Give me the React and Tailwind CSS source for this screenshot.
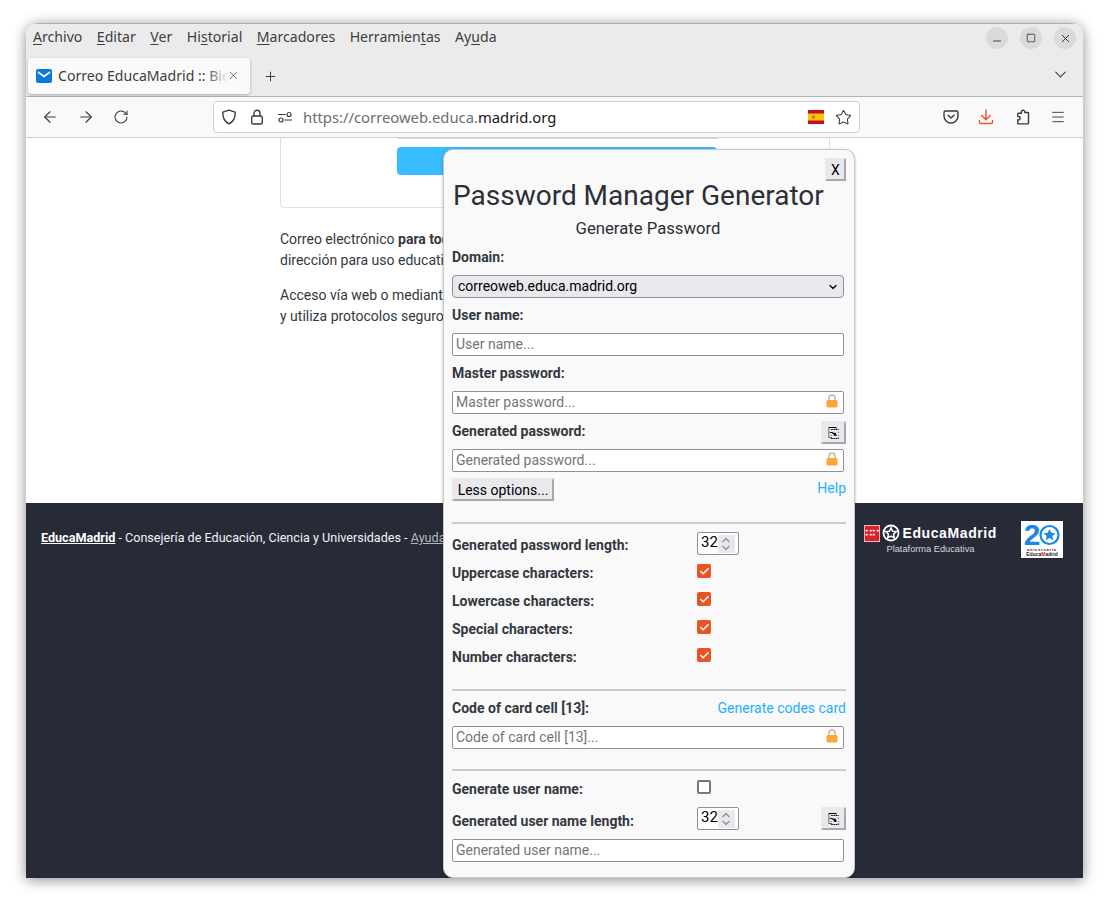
import { ArrowLeft, ArrowRight, RotateCw, X, Plus, ChevronDown, Minus, Square, Menu, Star, Check } from "lucide-react";

const menuItems = [
  ["", "A", "rchivo"],
  ["", "E", "ditar"],
  ["", "V", "er"],
  ["Hi", "s", "torial"],
  ["", "M", "arcadores"],
  ["Herramien", "t", "as"],
  ["Ay", "u", "da"],
];

// Title bar round buttons
const WindowButton = ({ children }) => (
  <div className="size-[22px] rounded-full bg-[#dadada] flex items-center justify-center text-[#2e2e2e]">{children}</div>
);

const Shield = () => (
  <svg width="16" height="16" viewBox="0 0 16 16" fill="none" stroke="#3a3a3e" strokeWidth="1.4">
    <path d="M8 1.2 14.2 3.2c.2 5.6-1.6 9.4-6.2 11.6C3.400 12.600 1.600 8.800 1.800 3.200Z" strokeLinejoin="round" />
  </svg>
);

const Lock = () => (
  <svg width="16" height="16" viewBox="0 0 16 16" fill="none" stroke="#3a3a3e" strokeWidth="1.4">
    <rect x="2.700" y="7" width="10.600" height="8" rx="1.600" />
    <path d="M5 7V4.300a3 3 0 0 1 6 0V7" />
  </svg>
);

const Permissions = () => (
  <svg width="16" height="16" viewBox="0 0 16 16" fill="none" stroke="#3a3a3e" strokeWidth="1.200">
    <path d="M1 5.500h7.500" />
    <circle cx="12" cy="5.500" r="2" />
    <path d="M15 11H7.500" />
    <circle cx="4" cy="11" r="2" />
  </svg>
);

const Pocket = () => (
  <svg width="16" height="16" viewBox="0 0 16 16" fill="none" stroke="#3a3a3e" strokeWidth="1.400" strokeLinecap="round" strokeLinejoin="round">
    <path d="M2.500 2h11A1.500 1.500 0 0 1 15 3.500V7a7 7 0 0 1-14 0V3.500A1.500 1.500 0 0 1 2.500 2Z" />
    <path d="m5 6.300 3 2.700 3-2.700" />
  </svg>
);

const Download = () => (
  <svg width="16" height="16" viewBox="0 0 16 16" fill="none" stroke="#f2521f" strokeWidth="1.400" strokeLinecap="round" strokeLinejoin="round">
    <path d="M8 1v9.500M3.800 6.600 8 10.800l4.200-4.200" />
    <path d="M1.500 11.500v1.700c0 .8.600 1.300 1.300 1.300h10.400c.7 0 1.300-.5 1.300-1.300v-1.700" />
  </svg>
);

const Puzzle = () => (
  <svg width="16" height="16" viewBox="0 0 16 16" fill="none" stroke="#3a3a3e" strokeWidth="1.400" strokeLinejoin="round">
    <path d="M9 1.200c1.300 0 2 .9 1.800 2.300h3c.4 0 .7.300.7.700v10c0 .4-.3.700-.7.700H4.500a.7.700 0 0 1-.7-.7v-3.400c1.500.3 2.400-.4 2.400-1.500S5.300 7.300 3.800 7.500V5c0-.4.300-.7.700-.7h3C7 2.500 7.700 1.200 9 1.200Z" />
  </svg>
);

const SpainFlag = () => (
  <svg width="16" height="14" viewBox="0 0 16 14">
    <rect width="16" height="14" fill="#c60b1e" />
    <rect y="3.500" width="16" height="7" fill="#ffc400" />
    <rect x="4" y="5.500" width="3" height="3" fill="#c8703a" />
  </svg>
);

const OrangeLock = () => (
  <svg width="12" height="14" viewBox="0 0 12 14" fill="none">
    <path d="M3 6.500V4a3 3 0 0 1 6 0v2.500" stroke="#c9b89a" strokeWidth="1.500" />
    <rect x="0.500" y="6" width="11" height="7.500" rx="1.500" fill="#ffa436" />
  </svg>
);

const TextField = ({ placeholder, locked }) => (
  <div className="relative w-[392px] h-[23px]">
    <input
      placeholder={placeholder}
      className="w-full h-full bg-white border border-[#8f8f9d] rounded-[2px] pl-[3px] text-[14px] text-black placeholder:text-[#757575] outline-none"
    />
    {locked && (
      <span className="absolute right-[6px] top-[4px] flex">
        <OrangeLock />
      </span>
    )}
  </div>
);

const Label = ({ children, className = "" }) => (
  <span className={`font-bold text-[14px] leading-[20px] text-[#33383f] whitespace-nowrap ${className}`}>{children}</span>
);

const CopyButton = () => (
  <button className="w-[25px] h-[23px] bg-[#e9e9ed] border-2 border-[#e9e9ed] border-r-[#a8a8a8] border-b-[#a8a8a8] flex items-center justify-center text-[14px] leading-none text-black font-['DejaVu_Sans',sans-serif]">
    ⎘
  </button>
);

const NumberField = () => (
  <div className="w-[42px] h-[23px] bg-white border border-[#8f8f9d] rounded-[2px] flex items-center pl-[3px] pr-[3px] justify-between">
    <span className="text-[15px] leading-none text-black -mt-[2px]">32</span>
    <span className="w-[18px] h-[18px] bg-[#e9e9ed] flex items-center justify-center">
      <svg width="10" height="14" viewBox="0 0 10 14" fill="none" stroke="#8a8a8a" strokeWidth="1.200">
        <path d="m1.500 5 3.500-3.500L8.500 5M1.500 9 5 12.500 8.500 9" />
      </svg>
    </span>
  </div>
);

const CheckBox = ({ checked }) =>
  checked ? (
    <span className="size-[14px] rounded-[2px] bg-[#e95420] flex items-center justify-center">
      <Check size={11} strokeWidth={3.500} className="text-white" />
    </span>
  ) : (
    <span className="size-[14px] rounded-[2px] bg-white border-2 border-[#77767b]" />
  );

const OptionRow = ({ label, checked }) => (
  <div className="flex items-center h-[28px]">
    <Label className="w-[245px]">{label}</Label>
    <span className="-mt-[4px] flex">
      <CheckBox checked={checked} />
    </span>
  </div>
);

const Divider = ({ className = "" }) => <div className={`h-[2px] bg-[#cccccc] ${className}`} />;

const Popup = () => (
  <div className="absolute left-[417px] top-[126px] w-[412px] h-[729px] bg-[#f9f9fa] border border-[#c8c8c8] rounded-[10px] pl-[8px] pr-[8px] shadow-[0_1px_3px_rgba(0,0,0,0.3)] font-['Roboto',sans-serif] overflow-hidden">
    <div className="flex justify-end pt-[8px]">
      <button className="w-[21px] h-[23px] bg-[#e9e9ed] border-2 border-[#e9e9ed] border-r-[#a8a8a8] border-b-[#a8a8a8] text-[14px] leading-none text-black">
        X
      </button>
    </div>
    <h1 className="ml-[1px] -mt-[2px] text-[28px] leading-[34px] text-[#2b3036] whitespace-nowrap">Password Manager Generator</h1>
    <p className="text-center text-[16.700px] leading-[20px] text-[#2b3036] mt-[6px] mr-[2px]">Generate Password</p>

    <div className="mt-[8px] h-[20px] flex items-center">
      <Label>Domain:</Label>
    </div>
    <div className="mt-[8px] w-[392px] h-[23px] bg-[#e9e9ed] border border-[#8f8f9d] rounded-[4px] flex items-center justify-between pl-[5px] pr-[4px] text-[14px] text-black">
      <span>correoweb.educa.madrid.org</span>
      <ChevronDown size={12} strokeWidth={2.500} />
    </div>

    <div className="mt-[7px] h-[20px] flex items-center">
      <Label>User name:</Label>
    </div>
    <div className="mt-[7px]">
      <TextField placeholder="User name..." />
    </div>

    <div className="mt-[8px] h-[20px] flex items-center">
      <Label>Master password:</Label>
    </div>
    <div className="mt-[7px]">
      <TextField placeholder="Master password..." locked />
    </div>

    <div className="mt-[8px] h-[23px] flex items-center justify-between">
      <Label className="-mt-[3px]">Generated password:</Label>
      <CopyButton />
    </div>
    <div className="mt-[4px]">
      <TextField placeholder="Generated password..." locked />
    </div>

    <div className="mt-[7px] flex items-center justify-between">
      <button className="w-[102px] h-[23px] bg-[#e9e9ed] border-2 border-[#e9e9ed] border-r-[#a8a8a8] border-b-[#a8a8a8] text-[14px] leading-none text-black">
        Less options...
      </button>
      <a className="text-[14px] text-[#1eb0ff] -mt-[2px]">Help</a>
    </div>

    <Divider className="mt-[21px]" />

    <div className="mt-[8px] flex items-center h-[23px]">
      <Label className="w-[245px] mt-[3px]">Generated password length:</Label>
      <NumberField />
    </div>
    <div className="mt-[4px]">
      <OptionRow label="Uppercase characters:" checked />
      <OptionRow label="Lowercase characters:" checked />
      <OptionRow label="Special characters:" checked />
      <OptionRow label="Number characters:" checked />
    </div>

    <Divider className="mt-[18px]" />

    <div className="mt-[6px] h-[22px] flex items-center justify-between">
      <Label>Code of card cell [13]:</Label>
      <a className="text-[14px] text-[#1eb0ff]">Generate codes card</a>
    </div>
    <div className="mt-[6px]">
      <TextField placeholder="Code of card cell [13]..." locked />
    </div>

    <Divider className="mt-[21px]" />

    <div className="mt-[7px] h-[22px] flex items-center">
      <Label className="w-[245px]">Generate user name:</Label>
      <span className="-mt-[4px] flex">
        <CheckBox />
      </span>
    </div>
    <div className="mt-[7px] h-[23px] flex items-center">
      <Label className="w-[245px] mt-[5px]">Generated user name length:</Label>
      <NumberField />
      <span className="ml-auto flex">
        <CopyButton />
      </span>
    </div>
    <div className="mt-[8px]">
      <TextField placeholder="Generated user name..." />
    </div>
  </div>
);

const MadridLogo = () => (
  <div className="flex flex-col">
    <div className="flex items-center gap-[2px]">
      <span className="w-[16px] h-[17px] bg-[#d7222b] border border-[#f5b5b5] flex flex-wrap items-center justify-center px-[1px]">
        <span className="text-[4px] leading-[4px] text-white tracking-[-0.5px]">★★★★ ★★★</span>
      </span>
      <svg width="18" height="18" viewBox="0 0 18 18">
        <circle cx="9" cy="9" r="7.500" fill="none" stroke="#fff" strokeWidth="1.800" />
        <path d="m9 3.800 1.600 3.400 3.700.4-2.700 2.500.7 3.700L9 12l-3.300 1.800.7-3.700-2.700-2.500 3.700-.4Z" fill="none" stroke="#fff" strokeWidth="1.500" />
      </svg>
      <span className="font-['Liberation_Sans',sans-serif] font-bold text-[14px] leading-none tracking-[0.6px] text-white">EducaMadrid</span>
    </div>
    <span className="ml-[22px] mt-[2px] font-['Liberation_Sans',sans-serif] text-[9.250px] leading-[10px] text-[#d5d6da]">Plataforma Educativa</span>
  </div>
);

const AnniversaryLogo = () => (
  <div className="w-[42px] h-[37px] bg-white flex flex-col items-center font-['Liberation_Sans',sans-serif]">
    <div className="flex items-center mt-[1px] h-[25px]">
      <span className="text-[30px] leading-none font-bold text-[#1e88e5]">2</span>
      <svg width="21" height="22" viewBox="0 0 21 22" className="-ml-[1px]">
        <circle cx="10.500" cy="11" r="9" fill="none" stroke="#1e88e5" strokeWidth="2.200" />
        <path d="m10.500 5 1.800 3.800 4.200.5-3.100 2.800.8 4.100-3.700-2.100-3.700 2.100.8-4.100-3.100-2.800 4.200-.5Z" fill="#1e88e5" />
      </svg>
    </div>
    <span className="text-[4px] leading-[5px] font-bold tracking-[0.8px] text-[#222]">aniversario</span>
    <span className="text-[5px] leading-[5px] font-bold text-[#1a1a1a]">
      Educa<span className="text-[#d7222b]">M</span>adrid
    </span>
  </div>
);

export default function App() {
  return (
    <div className="w-[1109px] h-[907px] bg-white pt-[23px] pl-[26px] overflow-hidden">
      <div className="relative w-[1057px] h-[855px] rounded-t-[12px] flex flex-col overflow-hidden shadow-[0_2px_14px_rgba(0,0,0,0.45)] bg-white">
        {/* Title + menu bar */}
        <div className="h-[35px] bg-[#ebebeb] border-t border-[#b0b0b0] flex items-start justify-between pl-[7px] pr-[7px] font-['Noto_Sans',sans-serif] text-[14.100px] text-[#3d3d3d] shrink-0">
          <div className="flex gap-[14.500px] mt-[2px]">
            {menuItems.map(([before, key, after]) => (
              <span key={before + key + after}>
                {before}
                <u className="underline-offset-2">{key}</u>
                {after}
              </span>
            ))}
          </div>
          <div className="flex gap-[12px] mt-[3px]">
            <WindowButton>
              <Minus size={12} strokeWidth={1.800} className="mt-[5px]" />
            </WindowButton>
            <WindowButton>
              <Square size={10} strokeWidth={1.800} />
            </WindowButton>
            <WindowButton>
              <X size={13} strokeWidth={1.800} />
            </WindowButton>
          </div>
        </div>

        {/* Tabs */}
        <div className="h-[39px] bg-[#ebebeb] border-b border-[#b4b4b4] flex items-start pl-[2px] pr-[13px] shrink-0">
          <div className="relative w-[222px] h-[36px] bg-[#fafafa] rounded-[4px] shadow-[0_1px_3px_rgba(0,0,0,0.3)] flex items-center pl-[8px] font-['Noto_Sans',sans-serif] text-[14.100px] text-[#3d3d3d] overflow-hidden">
            <svg width="16" height="14" viewBox="0 0 16 14" className="shrink-0">
              <rect width="16" height="14" rx="2" fill="#0b7ad6" />
              <path d="m2 3 6 4.500L14 3" fill="none" stroke="#fff" strokeWidth="1.600" />
            </svg>
            <span className="ml-[6px] whitespace-nowrap">Correo EducaMadrid :: Bienvenidos</span>
            <span className="absolute right-0 top-0 h-full w-[44px] bg-[linear-gradient(to_right,rgba(250,250,250,0),#fafafa_50%)]" />
            <X size={13} strokeWidth={1.300} className="absolute right-[10px] top-[11px]" />
          </div>
          <Plus size={15} strokeWidth={1.600} className="ml-[13px] mt-[11px] text-[#3d3d3d]" />
          <ChevronDown size={19} strokeWidth={1.400} className="ml-auto mt-[7px] text-[#3d3d3d]" />
        </div>

        {/* Nav toolbar */}
        <div className="h-[41px] bg-[#f9f9fb] border-b border-[#cfcfd2] flex items-center shrink-0">
          <div className="flex items-center gap-[18px] pl-[15px] w-[187px] text-[#3a3a3e]">
            <ArrowLeft size={18} strokeWidth={1.500} />
            <ArrowRight size={18} strokeWidth={1.500} />
            <RotateCw size={16} strokeWidth={1.600} />
          </div>
          <div className="w-[647px] h-[32px] bg-white border border-[#cfcfd2] rounded-[4px] flex items-center pl-[7px] pr-[7px]">
            <Shield />
            <span className="ml-[12px] flex">
              <Lock />
            </span>
            <span className="ml-[12px] flex">
              <Permissions />
            </span>
            <span className="ml-[10px] font-['Noto_Sans',sans-serif] text-[14.800px] text-[#6d6d72] whitespace-nowrap">
              https://correoweb.educa.<span className="text-[#15141a]">madrid.org</span>
            </span>
            <span className="ml-auto flex">
              <SpainFlag />
            </span>
            <Star size={17} strokeWidth={1.500} className="ml-[11px] text-[#3a3a3e]" />
          </div>
          <div className="flex-1 flex items-center gap-[20px] pl-[83px] text-[#3a3a3e]">
            <Pocket />
            <span className="-ml-[1px] flex">
              <Download />
            </span>
            <span className="flex">
              <Puzzle />
            </span>
            <Menu size={16} strokeWidth={1.400} />
          </div>
        </div>

        {/* Page content behind the popup */}
        <div className="h-[365px] bg-white pl-[254px] font-['Roboto',sans-serif] text-[14px] leading-[21px] text-[#33383f] shrink-0">
          <div className="relative w-[550px] h-[70px] border border-t-0 border-[#e0e0e0] rounded-b-[4px]">
            <div className="absolute left-[117px] top-0 w-[320px] h-px bg-[#d8d8d8]" />
            <div className="ml-[116px] pt-[9px]">
              <div className="w-[320px] h-[28px] bg-[#38bdff] rounded-[4px]" />
            </div>
          </div>
          <p className="mt-[21px] whitespace-nowrap">
            Correo electrónico <b>para todos</b>
          </p>
          <p className="whitespace-nowrap">dirección para uso educativo</p>
          <p className="mt-[14px] whitespace-nowrap">Acceso vía web o mediante</p>
          <p className="whitespace-nowrap">y utiliza protocolos seguros</p>
        </div>

        {/* Footer */}
        <div className="flex-1 bg-[#272b38] flex items-start justify-between pl-[15px] pr-[20px] pt-[18px] font-['Roboto',sans-serif]">
          <p className="mt-[7px] text-[12.600px] leading-[20px] text-[#f2f2f2] whitespace-nowrap">
            <b className="underline text-white">EducaMadrid</b> - Consejería de Educación, Ciencia y Universidades - <span className="underline text-[#b5b7bd]">Ayuda</span>
          </p>
          <div className="flex items-start gap-[24px]">
            <div className="mt-[3px]">
              <MadridLogo />
            </div>
            <AnniversaryLogo />
          </div>
        </div>

        <Popup />
      </div>
    </div>
  );
}
